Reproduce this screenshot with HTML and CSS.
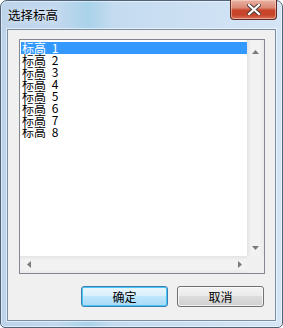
FILE: index.html
```html
<html>
  <head>
    <meta name="viewport" content="width=device-width, initial-scale=1.0">
    <link rel="stylesheet" href="styles.css">
  </head>
  <body>
    <div class="window">
      <div class="titlebar">
        <div class="title">选择标高</div>
        <div class="closeBtn">
          <svg width="14" height="11" viewBox="0 0 14 11">
            <path d="M2 1 L12 10 M12 1 L2 10" stroke="#4a3a38" stroke-width="4" stroke-linecap="square"/>
            <path d="M2 1 L12 10 M12 1 L2 10" stroke="#ffffff" stroke-width="2.2" stroke-linecap="square"/>
          </svg>
        </div>
      </div>

      <div class="client">
        <div class="listbox">
          <div class="listArea">
            <div class="items">
              <div class="item selected">标高 1</div>
              <div class="item">标高 2</div>
              <div class="item">标高 3</div>
              <div class="item">标高 4</div>
              <div class="item">标高 5</div>
              <div class="item">标高 6</div>
              <div class="item">标高 7</div>
              <div class="item">标高 8</div>
            </div>
            <div class="vscroll">
              <svg width="7" height="4" viewBox="0 0 7 4"><polygon points="3.5,0 7,4 0,4" fill="#7a7a7a"/></svg>
              <svg width="7" height="4" viewBox="0 0 7 4"><polygon points="0,0 7,0 3.5,4" fill="#7a7a7a"/></svg>
            </div>
          </div>
          <div class="hrow">
            <div class="hscroll">
              <svg width="4" height="7" viewBox="0 0 4 7"><polygon points="0,3.5 4,0 4,7" fill="#7a7a7a"/></svg>
              <svg width="4" height="7" viewBox="0 0 4 7"><polygon points="0,0 4,3.5 0,7" fill="#7a7a7a"/></svg>
            </div>
            <div class="corner"></div>
          </div>
        </div>

        <div class="buttons">
          <div class="button default">确定</div>
          <div class="button">取消</div>
        </div>
      </div>
    </div>
  </body>
</html>
```

FILE: styles.css
```css
body {
  margin: 0;
  width: 283px;
  height: 328px;
  background: #ffffff;
  font-family: "Noto Sans CJK SC", "Noto Sans", sans-serif;
}
.window {
  box-sizing: border-box;
  width: 283px;
  height: 328px;
  border: 1px solid #4f637a;
  border-radius: 7px 7px 5px 5px;
  padding: 0 6px 6px 6px;
  display: flex;
  flex-direction: column;
  background: linear-gradient(to right, #bcd3ea 0%, #c2d8ee 20%, #a9d3e9 31%, #c4dbf0 40%, #cde0f3 70%, #d4e5f6 100%);
  box-shadow: inset 0 0 0 1px rgba(255,255,255,0.5);
}
.titlebar {
  height: 28px;
  display: flex;
  justify-content: space-between;
  align-items: flex-start;
}
.title {
  margin-top: 6px;
  margin-left: 1px;
  font-size: 12.5px;
  line-height: 16px;
  color: #000000;
  text-shadow: 0 0 6px rgba(255,255,255,0.9);
}
.closeBtn {
  box-sizing: border-box;
  width: 47px;
  height: 20px;
  margin-top: -1px;
  margin-right: -1px;
  border: 1px solid #5e2b22;
  border-top: none;
  border-radius: 0 0 4px 4px;
  background: linear-gradient(to bottom, #eab3a5 0%, #dc8a76 40%, #c8432a 55%, #c7462c 80%, #d9775d 100%);
  box-shadow: inset 0 0 0 1px rgba(255,220,210,0.5);
  display: flex;
  align-items: center;
  justify-content: center;
}
.client {
  flex: 1;
  background: #f0f0f0;
  border: 1px solid #7b8ea4;
  box-shadow: 0 0 0 1px rgba(255,255,255,0.55);
  padding: 9px 10px 0 11px;
  display: flex;
  flex-direction: column;
}
.listbox {
  height: 235px;
  box-sizing: border-box;
  border: 1px solid #828790;
  background: #ffffff;
  display: flex;
  flex-direction: column;
}
.listArea {
  flex: 1;
  display: flex;
}
.items {
  flex: 1;
  padding: 2px 0 0 1px;
}
.item {
  height: 12px;
  line-height: 12px;
  font-size: 12px;
  padding-left: 1px;
  word-spacing: 3px;
  color: #000000;
  white-space: nowrap;
}
.selected {
  background: #3399ff;
  color: #ffffff;
}
.vscroll {
  width: 17px;
  background: linear-gradient(to right, #e4e4e4, #f2f2f2 25%, #f2f2f2 75%, #e9e9e9);
  display: flex;
  flex-direction: column;
  justify-content: space-between;
  align-items: center;
  padding: 10px 0 6px 0;
}
.hrow {
  height: 17px;
  display: flex;
}
.hscroll {
  flex: 1;
  background: linear-gradient(to bottom, #e4e4e4, #f2f2f2 25%, #f2f2f2 75%, #e9e9e9);
  display: flex;
  justify-content: space-between;
  align-items: center;
  padding: 0 5px 0 7px;
}
.corner {
  width: 17px;
  background: #f0f0f0;
}
.buttons {
  display: flex;
  justify-content: flex-end;
  gap: 9px;
  margin-top: 12px;
  margin-right: 1px;
}
.button {
  box-sizing: border-box;
  width: 87px;
  height: 21px;
  border: 1px solid #707070;
  border-radius: 3px;
  background: linear-gradient(to bottom, #f2f2f2 0%, #ebebeb 45%, #dddddd 50%, #cfcfcf 100%);
  box-shadow: inset 0 0 0 1px rgba(255,255,255,0.7);
  font-size: 12px;
  line-height: 19px;
  text-align: center;
  color: #000000;
}
.default {
  border-color: #3c7fb1;
  background: linear-gradient(to bottom, #eaf6fd 0%, #d9f0fc 45%, #bee6fd 50%, #a7d9f5 100%);
  box-shadow: inset 0 0 0 1px #48c6f5;
}
```
